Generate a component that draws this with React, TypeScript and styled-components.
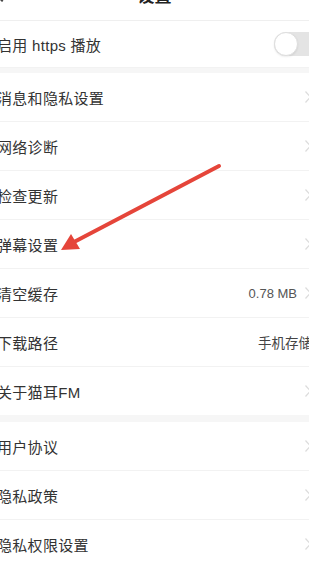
import React from "react";
import styled, { createGlobalStyle } from "styled-components";

const Global = createGlobalStyle`
  html, body { margin: 0; padding: 0; background: #fff; overflow: hidden; }
  body { font-family: "Liberation Sans", "Noto Sans CJK SC", sans-serif; }
`;

const Frame = styled.div`
  width: 309px;
  height: 563px;
  overflow: hidden;
  position: relative;
  background: #fff;
`;

const Page = styled.div`
  margin-left: -15px;
  width: 339px;
`;

const Header = styled.header`
  margin-top: -24px;
  height: 44px;
  display: flex;
  align-items: center;
  justify-content: center;
  border-bottom: 1px solid #efefef;
  position: relative;
`;

const Title = styled.h1`
  margin: 0;
  font-size: 17px;
  font-weight: 700;
  color: #222;
  transform: translateY(-4px);
`;

const Back = styled.span`
  position: absolute;
  left: 12px;
  top: 14px;
  width: 8px;
  height: 8px;
  border-left: 2px solid #444;
  border-bottom: 2px solid #444;
  transform: rotate(45deg);
`;

const Gap = styled.div<{ $h: number }>`
  height: ${(p) => p.$h}px;
  background: #f6f6f6;
`;

const Row = styled.div<{ $h?: number }>`
  height: ${(p) => p.$h ?? 48}px;
  display: flex;
  align-items: center;
  padding: 0 12px;
  border-bottom: 1px solid #f2f2f2;
  &:last-child { border-bottom: none; }
`;

const Label = styled.span`
  flex: 1;
  font-size: 15px;
  color: #333;
  letter-spacing: 0.3px;
`;

const Value = styled.span`
  font-size: 13px;
  color: #555;
  margin-right: 7px;
`;

const Path = styled.span`
  font-size: 13.5px;
  color: #444;
`;

const Chevron = styled.svg`
  width: 8px;
  height: 14px;
  flex: none;
`;

const Toggle = styled.div`
  width: 46px;
  height: 24px;
  border-radius: 12px;
  background: #e4e4e4;
  position: relative;
  margin-right: -8px;
`;

const Knob = styled.div`
  position: absolute;
  left: 0;
  top: 0;
  width: 22px;
  height: 22px;
  border-radius: 50%;
  background: #fff;
  border: 1px solid #dedede;
  box-shadow: 0 1px 2px rgba(0,0,0,0.08);
`;

const Arrow = styled.svg`
  position: absolute;
  left: 0;
  top: 0;
  width: 309px;
  height: 563px;
  pointer-events: none;
`;

const Arr = () => (
  <Chevron viewBox="0 0 8 14">
    <polyline points="1.5,1.5 6.5,7 1.5,12.5" fill="none" stroke="#dcdcdc" strokeWidth="1.3" />
  </Chevron>
);

const group1 = ["消息和隐私设置", "网络诊断", "检查更新", "弹幕设置"];
const group3 = ["用户协议", "隐私政策", "隐私权限设置"];

export default function App() {
  return (
    <>
      <Global />
      <Frame>
        <Page>
          <Header>
            <Back />
            <Title>设置</Title>
          </Header>
          <Row $h={46}>
            <Label>启用 https 播放</Label>
            <Toggle><Knob /></Toggle>
          </Row>
          <Gap $h={5} />
          <div>
            {group1.map((t) => (
              <Row key={t}>
                <Label>{t}</Label>
                <Arr />
              </Row>
            ))}
            <Row>
              <Label>清空缓存</Label>
              <Value>0.78 MB</Value>
              <Arr />
            </Row>
            <Row>
              <Label>下载路径</Label>
              <Path>手机存储</Path>
            </Row>
            <Row>
              <Label>关于猫耳FM</Label>
              <Arr />
            </Row>
          </div>
          <Gap $h={7} />
          <div>
            {group3.map((t) => (
              <Row key={t}>
                <Label>{t}</Label>
                <Arr />
              </Row>
            ))}
          </div>
        </Page>
        <Arrow viewBox="0 0 309 563">
          <line x1="219" y1="166" x2="74" y2="242" stroke="#e5453a" strokeWidth="4" strokeLinecap="round" />
          <polygon points="61,250 71,234 80,249" fill="#e5453a" />
        </Arrow>
      </Frame>
    </>
  );
}
